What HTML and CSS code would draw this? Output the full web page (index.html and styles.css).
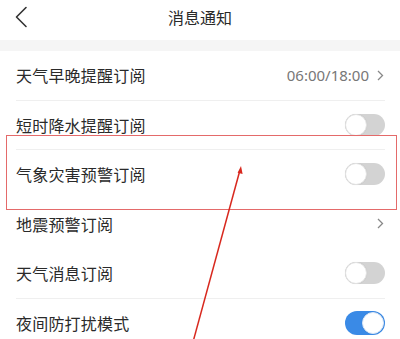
FILE: index.html
```html
<!DOCTYPE html>
<html lang="zh">
<head>
<meta charset="utf-8">
<link rel="stylesheet" href="styles.css">
</head>
<body>
<div class="page">
  <header class="nav">
    <span class="back">
      <svg width="14" height="22" viewBox="0 0 14 22"><path d="M12 1.5 L2.5 11 L12 20.5" fill="none" stroke="#333" stroke-width="1.6" stroke-linecap="round" stroke-linejoin="round"/></svg>
    </span>
    <h1 class="title">消息通知</h1>
    <span></span>
  </header>
  <div class="band"></div>
  <ul class="list">
    <li class="row line"><span class="label">天气早晚提醒订阅</span><span class="value">06:00/18:00<svg class="chev" width="7" height="11" viewBox="0 0 7 11"><path d="M1 1 L5.5 5.5 L1 10" fill="none" stroke="#888" stroke-width="1.3"/></svg></span></li>
    <li class="row line"><span class="label">短时降水提醒订阅</span><span class="switch"><span class="knob"></span></span></li>
    <li class="row"><span class="label">气象灾害预警订阅</span><span class="switch"><span class="knob"></span></span></li>
    <li class="row"><span class="label">地震预警订阅</span><span class="value"><svg class="chev" width="7" height="11" viewBox="0 0 7 11"><path d="M1 1 L5.5 5.5 L1 10" fill="none" stroke="#888" stroke-width="1.3"/></svg></span></li>
    <li class="row line"><span class="label">天气消息订阅</span><span class="switch"><span class="knob"></span></span></li>
    <li class="row"><span class="label">夜间防打扰模式</span><span class="switch on"><span class="knob"></span></span></li>
  </ul>
  <div class="highlight"></div>
  <svg class="arrow" width="400" height="339" viewBox="0 0 400 339">
    <line x1="193" y1="342" x2="240" y2="170" stroke="#d8281e" stroke-width="1.5"/>
    <path d="M241 166 L237.6 172.8 L242.6 174 Z" fill="#d8281e"/>
  </svg>
</div>
</body>
</html>
```
FILE: styles.css
```css
html, body {
  margin: 0;
  padding: 0;
  background: #fff;
}
.page {
  position: relative;
  width: 400px;
  height: 339px;
  overflow: hidden;
  font-family: "Noto Sans CJK SC", "Noto Sans", sans-serif;
  color: #2a2a2a;
}
.nav {
  height: 40px;
  display: grid;
  grid-template-columns: 60px 1fr 60px;
  align-items: center;
}
.back {
  display: flex;
  align-items: center;
  padding-left: 14px;
  padding-bottom: 7px;
}
.title {
  margin: 0;
  text-align: center;
  font-size: 16px;
  font-weight: 400;
  color: #2a2a2a;
  padding-bottom: 6px;
}
.band {
  height: 11px;
  background: #f5f5f5;
}
.list {
  list-style: none;
  margin: 0;
  padding: 0;
}
.row {
  height: 48.5px;
  margin: 0 15px 0 16px;
  display: flex;
  align-items: center;
  justify-content: space-between;
  border-bottom: 1px solid transparent;
}
.row.line {
  border-bottom-color: #efefef;
}
.label {
  font-size: 16px;
  color: #2a2a2a;
  letter-spacing: 0.2px;
}
.value {
  display: flex;
  align-items: center;
  gap: 8px;
  font-size: 15px;
  color: #777;
  font-family: "Noto Sans", "Noto Sans CJK SC", sans-serif;
  padding-right: 1px;
}
.chev {
  display: block;
}
.switch {
  position: relative;
  width: 40px;
  height: 22px;
  border-radius: 11px;
  background: #d3d3d3;
  box-sizing: border-box;
}
.knob {
  position: absolute;
  top: 0;
  left: 0;
  width: 22px;
  height: 22px;
  border-radius: 50%;
  background: #fff;
  box-sizing: border-box;
  border: 1px solid #e2e2e2;
  box-shadow: 0 0 1px rgba(0,0,0,0.1);
}
.switch.on {
  background: #3a8ae6;
  height: 24px;
  border-radius: 12px;
}
.switch.on .knob {
  left: auto;
  right: 1px;
  top: 1px;
  border-color: #d8e6f7;
}
.highlight {
  position: absolute;
  left: 6px;
  top: 135px;
  width: 391px;
  height: 75px;
  box-sizing: border-box;
  border: 1.5px solid #e46a6a;
}
.arrow {
  position: absolute;
  left: 0;
  top: 0;
  pointer-events: none;
}
```
